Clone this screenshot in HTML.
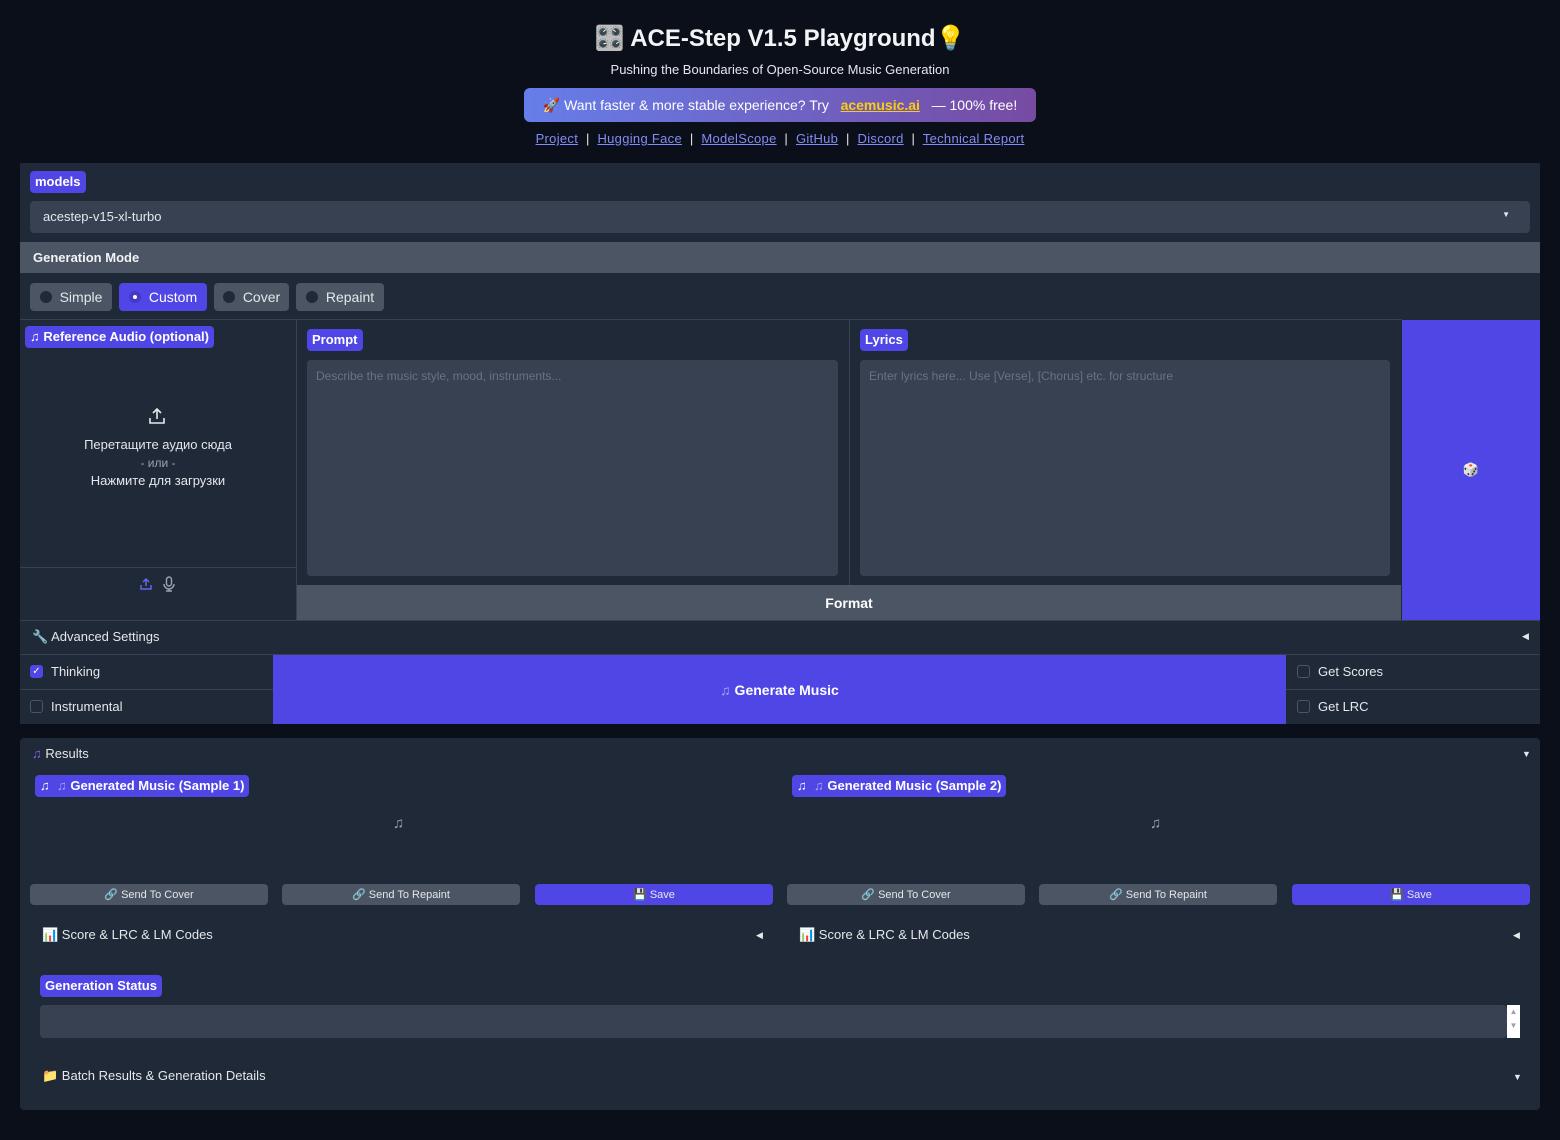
<!DOCTYPE html>
<html><head><meta charset="utf-8"><style>
*{box-sizing:border-box;margin:0;padding:0}
body{width:1560px;height:1140px;background:#0b0f19;font-family:"Liberation Sans","DejaVu Sans",sans-serif;color:#e5e7eb;position:relative;overflow:hidden}
.a{position:absolute}
.lbl{position:absolute;background:#4f46e5;color:#fff;font-weight:bold;font-size:13px;border-radius:4px;padding:0 5px;line-height:22px;white-space:nowrap}
.panel{background:#1f2937}
.inp{background:#374151;border-radius:4px}
.btn{background:#4b5563;border-radius:4px;color:#e5e7eb;font-size:14px;display:flex;align-items:center;justify-content:center}
.dot{display:inline-block;width:12px;height:12px;border-radius:50%;background:#1f2937;margin-right:8px}
.cb{display:inline-block;width:13px;height:13px;border:1px solid #4b5563;border-radius:3px;margin-right:8px;vertical-align:-2px}
.small{font-size:11px}
a{color:#818cf8;text-decoration:underline}
</style></head><body>
<div class="a" style="left:0;width:1560px;top:24px;text-align:center;font-size:24px;font-weight:bold;color:#f3f4f6">🎛️ ACE-Step V1.5 Playground💡</div>
<div class="a" style="left:0;width:1560px;top:62px;text-align:center;font-size:13px;color:#e5e7eb">Pushing the Boundaries of Open-Source Music Generation</div>
<div class="a" style="left:524px;top:88px;width:512px;height:34px;border-radius:6px;background:linear-gradient(90deg,#667eea,#764ba2);font-size:14px;color:#fff;display:flex;align-items:center;justify-content:center">🚀 Want faster &amp; more stable experience? Try&nbsp;&nbsp;&nbsp;<b style="color:#facc15;text-decoration:underline">acemusic.ai</b>&nbsp;&nbsp;&nbsp;— 100% free!</div>
<div class="a" style="left:0;width:1560px;top:131px;text-align:center;font-size:13px;color:#e5e7eb;letter-spacing:0.3px"><a>Project</a> &nbsp;|&nbsp; <a>Hugging Face</a> &nbsp;|&nbsp; <a>ModelScope</a> &nbsp;|&nbsp; <a>GitHub</a> &nbsp;|&nbsp; <a>Discord</a> &nbsp;|&nbsp; <a>Technical Report</a></div>

<div class="a panel" style="left:20px;top:163px;width:1520px;height:561px"></div>
<div class="lbl" style="left:30px;top:171px">models</div>
<div class="a inp" style="left:30px;top:201px;width:1500px;height:32px;font-size:13px;padding:8px 13px">acestep-v15-xl-turbo<span style="position:absolute;right:20px;top:9px;font-size:8px">▼</span></div>
<div class="a" style="left:20px;top:242px;width:1520px;height:31px;background:#4b5563;font-size:13px;font-weight:bold;padding:8px 13px;color:#f3f4f6">Generation Mode</div>
<div class="a btn" style="left:30px;top:283px;width:82px;height:28px"><span class="dot"></span>Simple</div>
<div class="a btn" style="left:119px;top:283px;width:88px;height:28px;background:#4f46e5;color:#fff"><span class="dot" style="background:#4338ca;position:relative"><span style="position:absolute;left:4px;top:4px;width:4px;height:4px;background:#fff;border-radius:50%"></span></span>Custom</div>
<div class="a btn" style="left:214px;top:283px;width:75px;height:28px"><span class="dot"></span>Cover</div>
<div class="a btn" style="left:296px;top:283px;width:88px;height:28px"><span class="dot"></span>Repaint</div>
<div class="a" style="left:20px;top:319px;width:1382px;height:1px;background:#374151"></div>
<div class="a" style="left:296px;top:320px;width:1px;height:300px;background:#374151"></div>
<div class="a" style="left:849px;top:320px;width:1px;height:265px;background:#374151"></div>
<div class="lbl" style="left:25px;top:326px">♫ Reference Audio (optional)</div>
<svg class="a" style="left:147px;top:406px" width="20" height="20" viewBox="0 0 20 20" fill="none" stroke="#e5e7eb" stroke-width="1.6"><path d="M10 13V3M6 7l4-4 4 4M3 12v5h14v-5"/></svg>
<div class="a" style="left:20px;width:276px;top:436px;text-align:center;font-size:13px;line-height:18px">Перетащите аудио сюда<br><span style="color:#9ca3af;font-size:12px">- или -</span><br>Нажмите для загрузки</div>
<div class="a" style="left:20px;top:567px;width:276px;height:1px;background:#374151"></div>
<svg class="a" style="left:139px;top:577px" width="14" height="14" viewBox="0 0 14 14" fill="none" stroke="#6366f1" stroke-width="1.5"><path d="M7 9V2M4 5l3-3 3 3M2 8v4h10V8"/></svg>
<svg class="a" style="left:163px;top:576px" width="12" height="16" viewBox="0 0 12 16" fill="none" stroke="#9ca3af" stroke-width="1.4"><rect x="3.5" y="1" width="5" height="9" rx="2.5"/><path d="M1 8a5 5 0 0010 0M6 13v2M3 15h6"/></svg>
<div class="lbl" style="left:307px;top:329px">Prompt</div>
<div class="a inp" style="left:307px;top:360px;width:531px;height:216px;font-size:12px;color:#6b7280;padding:9px 9px">Describe the music style, mood, instruments...</div>
<div class="lbl" style="left:860px;top:329px">Lyrics</div>
<div class="a inp" style="left:860px;top:360px;width:530px;height:216px;font-size:12px;color:#6b7280;padding:9px 9px">Enter lyrics here... Use [Verse], [Chorus] etc. for structure</div>
<div class="a" style="left:297px;top:585px;width:1104px;height:35px;background:#4b5563;font-size:14px;font-weight:bold;color:#fff;display:flex;align-items:center;justify-content:center">Format</div>
<div class="a" style="left:1402px;top:320px;width:138px;height:300px;background:#4f46e5;display:flex;align-items:center;justify-content:center;font-size:13px">🎲</div>
<div class="a" style="left:20px;top:620px;width:1520px;height:1px;background:#374151"></div>
<div class="a" style="left:32px;top:629px;font-size:13px">🔧 Advanced Settings</div>
<div class="a" style="left:1522px;top:631px;font-size:9px">◀</div>
<div class="a" style="left:20px;top:654px;width:1520px;height:1px;background:#374151"></div>
<div class="a" style="left:20px;top:689px;width:1520px;height:1px;background:#374151"></div>
<div class="a" style="left:30px;top:664px;font-size:13px;display:flex;align-items:center"><span class="cb" style="background:#4f46e5;border-color:#4f46e5;color:#fff;font-size:10px;line-height:11px;text-align:center">✓</span>Thinking</div>
<div class="a" style="left:30px;top:699px;font-size:13px;display:flex;align-items:center"><span class="cb"></span>Instrumental</div>
<div class="a" style="left:273px;top:655px;width:1013px;height:69px;background:#4f46e5;color:#fff;font-size:14px;font-weight:bold;display:flex;align-items:center;justify-content:center"><span style="opacity:.5">♫</span>&nbsp;Generate Music</div>
<div class="a" style="left:1297px;top:664px;font-size:13px;display:flex;align-items:center"><span class="cb"></span>Get Scores</div>
<div class="a" style="left:1297px;top:699px;font-size:13px;display:flex;align-items:center"><span class="cb"></span>Get LRC</div>

<div class="a panel" style="left:20px;top:738px;width:1520px;height:372px;border-radius:4px"></div>
<div class="a" style="left:32px;top:746px;font-size:13px"><span style="color:#8b5cf6">♫</span> Results</div>
<div class="a" style="left:1522px;top:749px;font-size:9px">▼</div>
<div class="lbl" style="left:35px;top:775px;font-size:13px">♫ &nbsp;<span style="opacity:.5">♫</span> Generated Music (Sample 1)</div>
<div class="lbl" style="left:792px;top:775px;font-size:13px">♫ &nbsp;<span style="opacity:.5">♫</span> Generated Music (Sample 2)</div>
<div class="a" style="left:393px;top:815px;font-size:15px;color:#9ca3af">♫</div>
<div class="a" style="left:1150px;top:815px;font-size:15px;color:#9ca3af">♫</div>
<div class="a btn small" style="left:30px;top:884px;width:238px;height:21px">🔗 Send To Cover</div>
<div class="a btn small" style="left:282px;top:884px;width:238px;height:21px">🔗 Send To Repaint</div>
<div class="a btn small" style="left:535px;top:884px;width:238px;height:21px;background:#4f46e5">💾 Save</div>
<div class="a btn small" style="left:787px;top:884px;width:238px;height:21px">🔗 Send To Cover</div>
<div class="a btn small" style="left:1039px;top:884px;width:238px;height:21px">🔗 Send To Repaint</div>
<div class="a btn small" style="left:1292px;top:884px;width:238px;height:21px;background:#4f46e5">💾 Save</div>
<div class="a" style="left:42px;top:927px;font-size:13px">📊 Score &amp; LRC &amp; LM Codes</div>
<div class="a" style="left:756px;top:930px;font-size:9px">◀</div>
<div class="a" style="left:799px;top:927px;font-size:13px">📊 Score &amp; LRC &amp; LM Codes</div>
<div class="a" style="left:1513px;top:930px;font-size:9px">◀</div>
<div class="lbl" style="left:40px;top:975px">Generation Status</div>
<div class="a inp" style="left:40px;top:1005px;width:1467px;height:33px"></div>
<div class="a" style="left:1507px;top:1005px;width:13px;height:33px;background:#fff;color:#9ca3af;font-size:8px;text-align:center;line-height:14px">▲<br>▼</div>
<div class="a" style="left:42px;top:1068px;font-size:13px">📁 Batch Results &amp; Generation Details</div>
<div class="a" style="left:1513px;top:1072px;font-size:9px">▼</div>
</body></html>
